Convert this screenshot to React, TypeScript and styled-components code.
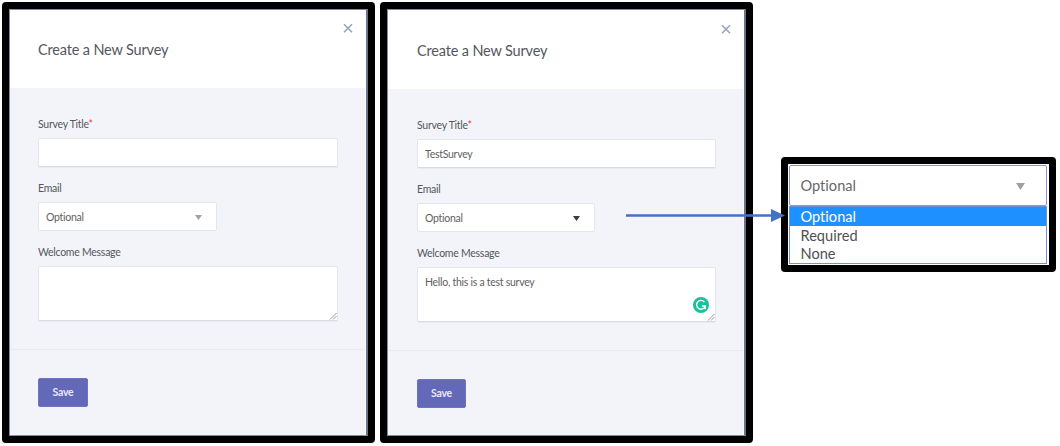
import React from 'react';
import styled, { createGlobalStyle } from 'styled-components';

const GlobalStyle = createGlobalStyle`
  * { box-sizing: border-box; }
  body {
    margin: 0;
    background: #fff;
    font-family: Lato, "Liberation Sans", sans-serif;
    font-variant-ligatures: none;
    color: #53575d;
  }
`;

const Page = styled.main`
  position: relative;
  display: flex;
  align-items: flex-start;
  width: 1060px;
  height: 446px;
  padding: 2px 4px 0 2px;
  overflow: hidden;
`;

const Frame = styled.section`
  flex: none;
  width: 373px;
  height: 441px;
  border: 7px solid #000;
  border-radius: 4px;
  background: #000;
  & + & { margin-left: 5px; }
`;

const Dialog = styled.div`
  display: flex;
  flex-direction: column;
  width: 359px;
  height: 427px;
  border: 1px solid #848a9c;
  border-right: 2px solid #6d7389;
  background: #f3f4f9;
  padding-right: 1px;
  box-shadow: inset -1px 0 #fbfbfd;
`;

const Header = styled.header<{ $shift: number }>`
  display: flex;
  justify-content: space-between;
  flex: none;
  height: ${p => 78 + p.$shift}px;
  margin-right: -1px;
  padding: ${p => 12 + p.$shift}px 12px 0 ${p => 28 + p.$shift}px;
  background: #fff;
`;

const Title = styled.h1`
  margin: 17px 0 0;
  font-size: 14.5px;
  letter-spacing: -0.16px;
  line-height: 22px;
  font-weight: 400;
  white-space: nowrap;
`;

const CloseIcon = styled.svg`
  width: 12px;
  height: 12px;
  display: block;
`;

const Body = styled.div<{ $shift: number }>`
  display: flex;
  flex-direction: column;
  flex: none;
  height: ${p => 262 - p.$shift * 0.5}px;
  padding: 28px 0 0 ${p => 28 + p.$shift}px;
  border-bottom: 1px solid #e8eaef;
`;

const Label = styled.label`
  display: block;
  height: 16px;
  line-height: 16px;
  font-size: 10.5px;
  letter-spacing: -0.26px;
  white-space: nowrap;
`;

const Required = styled.span`
  color: #f23c3c;
`;

const Control = styled.div<{ $w: number; $h: number; $flat?: boolean }>`
  position: relative;
  display: flex;
  justify-content: space-between;
  flex: none;
  width: ${p => p.$w}px;
  height: ${p => p.$h}px;
  margin: 6px 0 13px;
  padding: 6px 14px 0 7px;
  border: 1px solid #e4e6ec;
  border-bottom-color: ${p => (p.$flat ? '#e4e6ec' : '#d9dbe3')};
  border-radius: 2px;
  background: #fff;
  box-shadow: ${p => (p.$flat ? 'none' : '0 1px 0 #eaebf1')};
  font-size: 10.5px;
  letter-spacing: -0.27px;
  line-height: 16px;
  color: #5f6062;
`;

const Caret = styled.svg`
  flex: none;
  width: 7px;
  height: 5px;
  margin-top: 6px;
`;

const Grip = styled.svg`
  position: absolute;
  right: 0;
  bottom: 0;
  width: 8px;
  height: 8px;
`;

const Assistant = styled.svg`
  position: absolute;
  right: 6.5px;
  bottom: 8px;
  width: 16px;
  height: 16px;
`;

const Footer = styled.footer<{ $shift: number }>`
  padding: 28px 0 0 ${p => 28 + p.$shift}px;
`;

const SaveButton = styled.button<{ $w: number }>`
  display: block;
  width: ${p => p.$w}px;
  height: 29px;
  padding: 0 0 1px;
  border: 1px solid #6f74c0;
  border-radius: 2px;
  background: #6468b9;
  color: #e9e9f9;
  font: 700 10.5px Lato, sans-serif;
  letter-spacing: -0.25px;
`;

const MenuFrame = styled.section`
  flex: none;
  width: 275px;
  height: 115px;
  margin: 155px 0 0 28px;
  padding: 1px 2px 1px 1px;
  border: 7px solid #000;
  border-radius: 4px;
  background: #fff;
`;

const MenuTrigger = styled.div`
  display: flex;
  justify-content: space-between;
  height: 41px;
  padding: 0 21px 0 10.5px;
  border: 1px solid #8e8fdf;
  border-radius: 2px;
  font-size: 14.6px;
  line-height: 39px;
  color: #66686a;
`;

const MenuCaret = styled.svg`
  width: 9px;
  height: 7px;
  margin-top: 17px;
`;

const Options = styled.ul`
  margin: 0;
  padding: 0;
  height: 58px;
  border: 1px solid #7291d4;
  list-style: none;
`;

const Option = styled.li<{ $active?: boolean }>`
  height: 18.7px;
  padding-left: 10.5px;
  font-size: 14.6px;
  line-height: 19px;
  color: ${p => (p.$active ? '#fff' : '#4f5052')};
  background: ${p => (p.$active ? '#1e90ff' : '#fff')};
`;

const Arrow = styled.svg`
  position: absolute;
  left: 626px;
  top: 208px;
  width: 160px;
  height: 15px;
`;

const ResizeGrip = () => (
  <Grip viewBox="0 0 8 8">
    <path d="M1 7.5 7.5 1M4 7.5 7.5 4" stroke="#96989c" strokeWidth="1" fill="none" />
  </Grip>
);

type SurveyProps = { title?: string; message?: string; shift?: number; caret: string; assistant?: boolean };

const SurveyDialog = ({ title, message, shift = 0, caret, assistant }: SurveyProps) => (
  <Frame>
    <Dialog>
      <Header $shift={shift}>
        <Title>Create a New Survey</Title>
        <CloseIcon viewBox="0 0 12 12">
          <path d="M2 2.2 10 10.2M10 2.2 2 10.2" stroke="#9aa3bd" strokeWidth="1.6" fill="none" />
        </CloseIcon>
      </Header>
      <Body $shift={shift}>
        <Label>Survey Title<Required>*</Required></Label>
        <Control $w={300 - shift} $h={29}>{title}</Control>
        <Label>Email</Label>
        <Control $w={179 - shift} $h={29} $flat>
          Optional
          <Caret viewBox="0 0 7 5"><path d="M0 0H7L3.5 5Z" fill={caret} /></Caret>
        </Control>
        <Label>Welcome Message</Label>
        <Control $w={300 - shift} $h={54.5}>
          {message}
          {assistant && (
            <Assistant viewBox="0 0 16 16">
              <circle cx="8" cy="8" r="8" fill="#15c39a" />
              <path d="M11.4 5A4.4 4.4 0 1 0 12.2 9.2M8.8 9H12.3V12.2" stroke="#fff" strokeWidth="1.4" fill="none" />
            </Assistant>
          )}
          <ResizeGrip />
        </Control>
      </Body>
      <Footer $shift={shift}>
        <SaveButton $w={50 - shift}>Save</SaveButton>
      </Footer>
    </Dialog>
  </Frame>
);

export default function App() {
  return (
    <>
      <GlobalStyle />
      <Page>
        <SurveyDialog caret="#a3a3a5" />
        <SurveyDialog title="TestSurvey" message="Hello, this is a test survey" shift={1} caret="#3c3c3e" assistant />
        <MenuFrame>
          <MenuTrigger>
            Optional
            <MenuCaret viewBox="0 0 9 7"><path d="M0 0H9L4.5 7Z" fill="#a0a0a0" /></MenuCaret>
          </MenuTrigger>
          <Options>
            <Option $active>Optional</Option>
            <Option>Required</Option>
            <Option>None</Option>
          </Options>
        </MenuFrame>
        <Arrow viewBox="0 0 160 15">
          <path d="M0 7.5H147" stroke="#4472c4" strokeWidth="2.6" />
          <path d="M145 1 159 7.5 145 14Z" fill="#4472c4" />
        </Arrow>
      </Page>
    </>
  );
}
